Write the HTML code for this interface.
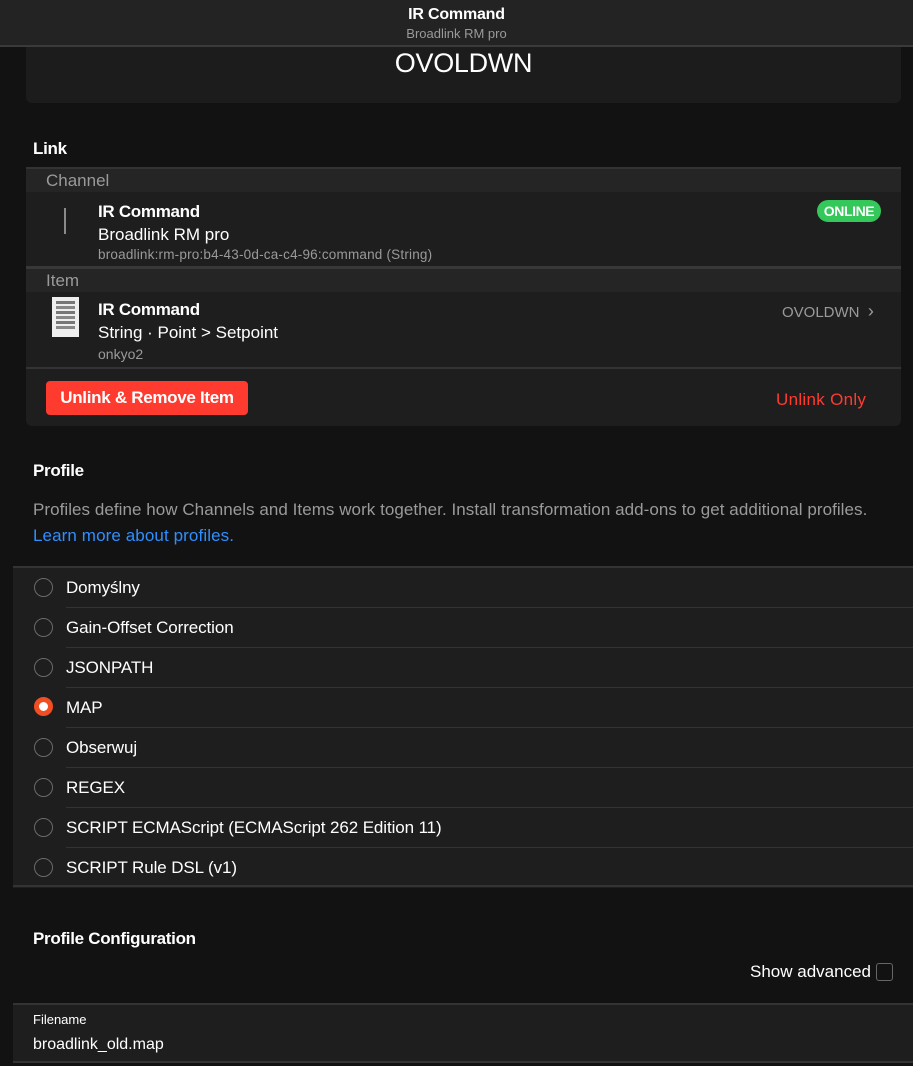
<!DOCTYPE html>
<html><head><style>
*{box-sizing:border-box;margin:0;padding:0}
body{width:913px;height:1066px;overflow:hidden;background:#121212;font-family:"Liberation Sans",sans-serif;color:#fff;position:relative}
.abs{position:absolute}
.hdr{left:0;top:0;width:913px;height:47px;background:#232323;border-bottom:2px solid #3a3a3a;text-align:center}
.g{color:#9a9a9a}
.radio{position:absolute;left:21px;width:19px;height:19px;border:1.5px solid #6a6a6a;border-radius:50%}
.row{position:absolute;left:13px;width:900px;height:40px;background:#1e1e1e}
.row span{position:absolute;left:53px;top:10px;font-size:17px;letter-spacing:-0.1px}
.row .line{position:absolute;left:53px;right:0;bottom:0;height:1px;background:#333}
</style></head><body>
<div class="abs hdr"><div style="font-size:16px;font-weight:bold;padding-top:6px;letter-spacing:-0.2px">IR Command</div><div class="g" style="font-size:13px;margin-top:2px">Broadlink RM pro</div></div>
<div class="abs" style="left:26px;top:47px;width:875px;height:56px;background:#1c1c1c;border-radius:0 0 6px 6px;text-align:center;font-size:27px;padding-top:1px;letter-spacing:-0.3px">OVOLDWN</div>
<div class="abs" style="left:33px;top:139px;font-size:17px;font-weight:bold;letter-spacing:-0.3px">Link</div>
<div class="abs" style="left:26px;top:167px;width:875px;height:259px;background:#1e1e1e;border-radius:0 0 6px 6px;overflow:hidden;border-top:2px solid #333">
 <div class="abs g" style="left:0;top:0;width:875px;height:23px;background:#252525;font-size:17px;padding-left:20px;padding-top:2px">Channel</div>
 <div class="abs" style="left:38px;top:39px;width:2px;height:26px;background:#8a8a8a"></div>
 <div class="abs" style="left:72px;top:33px;font-size:17px;font-weight:bold;letter-spacing:-0.3px">IR Command</div>
 <div class="abs" style="left:72px;top:56px;font-size:17px">Broadlink RM pro</div>
 <div class="abs g" style="left:72px;top:78px;font-size:13.5px;letter-spacing:0.2px">broadlink:rm-pro:b4-43-0d-ca-c4-96:command (String)</div>
 <div class="abs" style="left:791px;top:31px;width:64px;height:22px;background:#34c759;border-radius:11px;font-size:14px;font-weight:bold;text-align:center;line-height:22px;letter-spacing:-0.4px">ONLINE</div>
 <div class="abs" style="left:0;top:97px;width:875px;height:3px;background:#383838"></div>
 <div class="abs g" style="left:0;top:100px;width:875px;height:23px;background:#252525;font-size:17px;padding-left:20px;padding-top:2px">Item</div>
 <div class="abs" style="left:26px;top:128px;width:27px;height:40px;background:#eee;padding:4px 4px">
  <div style="height:3px;background:#777;margin-bottom:2px"></div><div style="height:3px;background:#888;margin-bottom:2px"></div><div style="height:3px;background:#777;margin-bottom:2px"></div><div style="height:3px;background:#888;margin-bottom:2px"></div><div style="height:3px;background:#777;margin-bottom:2px"></div><div style="height:3px;background:#888;margin-bottom:2px"></div></div>
 <div class="abs" style="left:72px;top:131px;font-size:17px;font-weight:bold;letter-spacing:-0.3px">IR Command</div>
 <div class="abs" style="left:72px;top:154px;font-size:17px">String · Point &gt; Setpoint</div>
 <div class="abs g" style="left:72px;top:177px;font-size:14px">onkyo2</div>
 <div class="abs g" style="left:756px;top:132px;font-size:15px;letter-spacing:0">OVOLDWN &nbsp;<span style="font-size:18px">›</span></div>
 <div class="abs" style="left:0;top:198px;width:875px;height:2px;background:#333"></div>
 <div class="abs" style="left:20px;top:212px;width:202px;height:34px;background:#ff3b30;border-radius:4px;font-size:17px;font-weight:bold;text-align:center;line-height:34px;letter-spacing:-0.3px">Unlink &amp; Remove Item</div>
 <div class="abs" style="left:750px;top:221px;font-size:17px;color:#ff3b30;letter-spacing:0.3px">Unlink Only</div>
</div>
<div class="abs" style="left:33px;top:461px;font-size:17px;font-weight:bold;letter-spacing:-0.3px">Profile</div>
<div class="abs g" style="left:33px;top:500px;font-size:17px;letter-spacing:0.05px;white-space:nowrap">Profiles define how Channels and Items work together. Install transformation add-ons to get additional profiles.</div>
<div class="abs" style="left:33px;top:526px;font-size:17px;color:#2f8fff;letter-spacing:0.1px">Learn more about profiles.</div>
<div class="abs" style="left:13px;top:566px;width:900px;height:2px;background:#333"></div>
<div class="row" style="top:568px"><div class="radio" style="top:10px"></div><span>Domyślny</span><div class="line"></div></div>
<div class="row" style="top:608px"><div class="radio" style="top:10px"></div><span>Gain-Offset Correction</span><div class="line"></div></div>
<div class="row" style="top:648px"><div class="radio" style="top:10px"></div><span>JSONPATH</span><div class="line"></div></div>
<div class="row" style="top:688px"><div class="radio" style="top:9px;border:5.5px solid #f04e23;background:#fff"></div><span>MAP</span><div class="line"></div></div>
<div class="row" style="top:728px"><div class="radio" style="top:10px"></div><span>Obserwuj</span><div class="line"></div></div>
<div class="row" style="top:768px"><div class="radio" style="top:10px"></div><span>REGEX</span><div class="line"></div></div>
<div class="row" style="top:808px"><div class="radio" style="top:10px"></div><span>SCRIPT ECMAScript (ECMAScript 262 Edition 11)</span><div class="line"></div></div>
<div class="row" style="top:848px"><div class="radio" style="top:10px"></div><span>SCRIPT Rule DSL (v1)</span></div>
<div class="abs" style="left:13px;top:885px;width:900px;height:2px;background:#333"></div>
<div class="abs" style="left:33px;top:929px;font-size:17px;font-weight:bold;letter-spacing:-0.3px">Profile Configuration</div>
<div class="abs" style="left:750px;top:962px;font-size:17px">Show advanced</div>
<div class="abs" style="left:876px;top:963px;width:17px;height:18px;border:1.5px solid #666;border-radius:3px"></div>
<div class="abs" style="left:13px;top:1003px;width:900px;height:60px;background:#1e1e1e;border-top:2px solid #333;border-bottom:2px solid #333"></div>
<div class="abs" style="left:33px;top:1012px;font-size:13px">Filename</div>
<div class="abs" style="left:33px;top:1036px;font-size:16px">broadlink_old.map</div>
</body></html>
